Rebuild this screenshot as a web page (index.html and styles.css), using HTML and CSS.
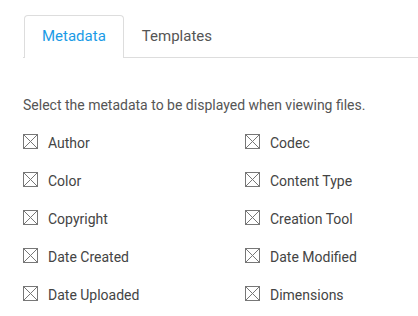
FILE: index.html
```html
<!DOCTYPE html>
<html>
<head>
<meta charset="utf-8">
<link rel="stylesheet" href="styles.css">
</head>
<body>
<div class="page">
  <div class="tabs">
    <div class="tab active">Metadata</div>
    <div class="tab">Templates</div>
  </div>
  <p class="desc">Select the metadata to be displayed when viewing files.</p>
  <div class="grid">
    <label class="item"><svg class="box" viewBox="0 0 15 15" width="15" height="15"><rect x="0.5" y="0.5" width="14" height="14"/><path d="M0.5 0.5L14.5 14.5M14.5 0.5L0.5 14.5"/></svg><span>Author</span></label>
    <label class="item"><svg class="box" viewBox="0 0 15 15" width="15" height="15"><rect x="0.5" y="0.5" width="14" height="14"/><path d="M0.5 0.5L14.5 14.5M14.5 0.5L0.5 14.5"/></svg><span>Codec</span></label>
    <label class="item"><svg class="box" viewBox="0 0 15 15" width="15" height="15"><rect x="0.5" y="0.5" width="14" height="14"/><path d="M0.5 0.5L14.5 14.5M14.5 0.5L0.5 14.5"/></svg><span>Color</span></label>
    <label class="item"><svg class="box" viewBox="0 0 15 15" width="15" height="15"><rect x="0.5" y="0.5" width="14" height="14"/><path d="M0.5 0.5L14.5 14.5M14.5 0.5L0.5 14.5"/></svg><span>Content Type</span></label>
    <label class="item"><svg class="box" viewBox="0 0 15 15" width="15" height="15"><rect x="0.5" y="0.5" width="14" height="14"/><path d="M0.5 0.5L14.5 14.5M14.5 0.5L0.5 14.5"/></svg><span>Copyright</span></label>
    <label class="item"><svg class="box" viewBox="0 0 15 15" width="15" height="15"><rect x="0.5" y="0.5" width="14" height="14"/><path d="M0.5 0.5L14.5 14.5M14.5 0.5L0.5 14.5"/></svg><span>Creation Tool</span></label>
    <label class="item"><svg class="box" viewBox="0 0 15 15" width="15" height="15"><rect x="0.5" y="0.5" width="14" height="14"/><path d="M0.5 0.5L14.5 14.5M14.5 0.5L0.5 14.5"/></svg><span>Date Created</span></label>
    <label class="item"><svg class="box" viewBox="0 0 15 15" width="15" height="15"><rect x="0.5" y="0.5" width="14" height="14"/><path d="M0.5 0.5L14.5 14.5M14.5 0.5L0.5 14.5"/></svg><span>Date Modified</span></label>
    <label class="item"><svg class="box" viewBox="0 0 15 15" width="15" height="15"><rect x="0.5" y="0.5" width="14" height="14"/><path d="M0.5 0.5L14.5 14.5M14.5 0.5L0.5 14.5"/></svg><span>Date Uploaded</span></label>
    <label class="item"><svg class="box" viewBox="0 0 15 15" width="15" height="15"><rect x="0.5" y="0.5" width="14" height="14"/><path d="M0.5 0.5L14.5 14.5M14.5 0.5L0.5 14.5"/></svg><span>Dimensions</span></label>
  </div>
</div>
</body>
</html>
```
FILE: styles.css
```css
html, body {
  margin: 0;
  padding: 0;
  background: #fff;
}
body {
  font-family: Roboto, "Liberation Sans", sans-serif;
  color: #444;
}
.page {
  padding: 15px 0 0 23px;
}
.tabs {
  display: flex;
  border-bottom: 1px solid #ddd;
  padding-left: 1px;
}
.tab {
  font-size: 15px;
  line-height: 20px;
  padding: 10px 17px 11px;
  border: 1px solid transparent;
  border-bottom: none;
  border-radius: 4px 4px 0 0;
  color: #555;
  margin-bottom: -1px;
}
.tab.active {
  border-color: #ddd;
  background: #fff;
  color: #1a9be6;
  padding-bottom: 12px;
}
.desc {
  margin: 37px 0 18px;
  font-size: 14px;
  line-height: 20px;
  color: #555;
}
.grid {
  display: grid;
  grid-template-columns: 222px 1fr;
  row-gap: 18px;
}
.item {
  display: flex;
  align-items: center;
  gap: 10px;
  font-size: 14px;
  line-height: 20px;
  color: #444;
}
.box {
  fill: none;
  stroke: #777;
  stroke-width: 1;
  margin-top: -3px;
}
```
